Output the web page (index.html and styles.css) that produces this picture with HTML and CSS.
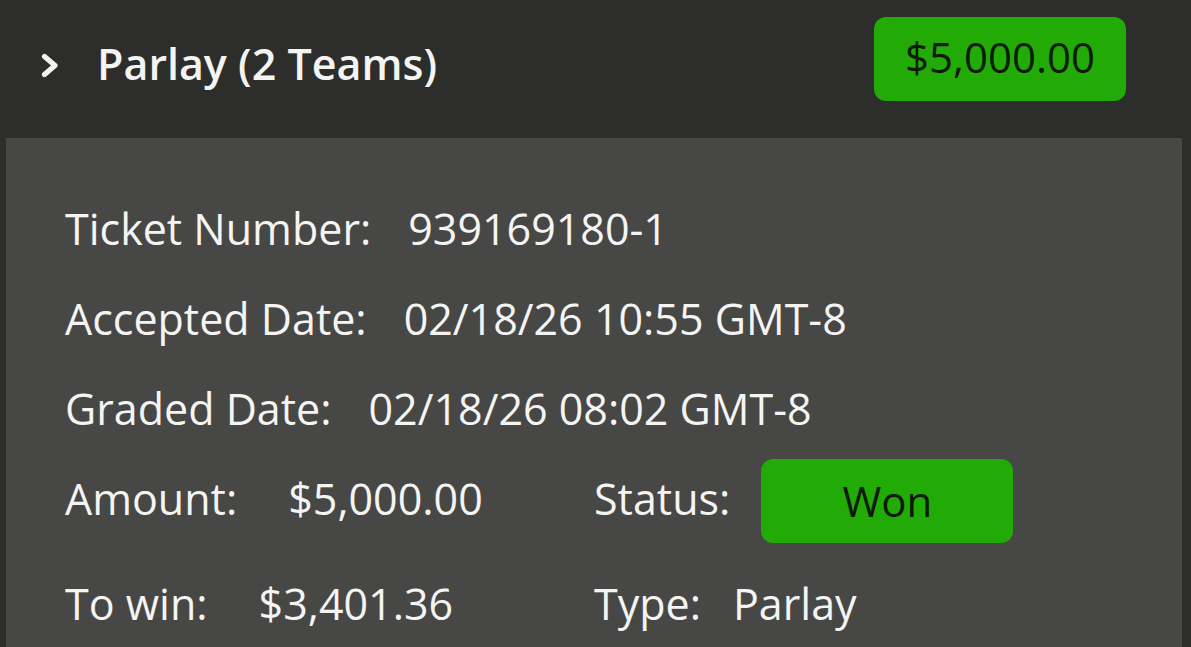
FILE: index.html
```html
<!DOCTYPE html>
<html lang="en">
<head>
<meta charset="utf-8">
<title>Parlay (2 Teams)</title>
<link rel="stylesheet" href="styles.css">
</head>
<body>
<div class="ticket">
  <header class="ticket-head">
    <svg class="chevron" width="18" height="25" viewBox="0 0 18 25" aria-hidden="true">
      <polyline points="3.5,3.5 14,12.5 3.5,21.5" fill="none" stroke="#f4f4f2" stroke-width="5.2" stroke-linecap="round" stroke-linejoin="round"/>
    </svg>
    <h1 class="ticket-title">Parlay (2 Teams)</h1>
    <div class="badge badge-head">$5,000.00</div>
  </header>
  <section class="ticket-body">
    <div class="row">
      <span class="label">Ticket Number:</span><span class="value gap-a">939169180-1</span>
    </div>
    <div class="row">
      <span class="label">Accepted Date:</span><span class="value gap-a">02/18/26 10:55 GMT-8</span>
    </div>
    <div class="row">
      <span class="label">Graded Date:</span><span class="value gap-a">02/18/26 08:02 GMT-8</span>
    </div>
    <div class="row row-split">
      <div class="field"><span class="label">Amount:</span><span class="value gap-b">$5,000.00</span></div>
      <div class="field"><span class="label">Status:</span><div class="badge badge-status">Won</div></div>
    </div>
    <div class="row row-split row-last">
      <div class="field"><span class="label">To win:</span><span class="value gap-b">$3,401.36</span></div>
      <div class="field"><span class="label">Type:</span><span class="value gap-c">Parlay</span></div>
    </div>
  </section>
</div>
</body>
</html>
```

FILE: styles.css
```css
* {
  box-sizing: border-box;
}

html, body {
  margin: 0;
  padding: 0;
  background: #2d2d2b;
  font-family: "Open Sans", "Noto Sans", "Liberation Sans", sans-serif;
  color: #f4f4f2;
}

.ticket {
  width: 1191px;
}

.ticket-head {
  display: flex;
  align-items: flex-start;
  height: 138px;
  padding: 17px 65px 0 41px;
}

.chevron {
  display: block;
  flex: none;
  margin-top: 36px;
}

.ticket-title {
  margin: 17px 0 0 38px;
  font-size: 43px;
  line-height: 60px;
  font-weight: 600;
  color: #f4f4f2;
  letter-spacing: 0;
}

.badge {
  display: flex;
  align-items: center;
  justify-content: center;
  width: 252px;
  height: 84px;
  border-radius: 12px;
  background: #22ab06;
  color: #0c1a06;
  font-size: 42px;
  line-height: 60px;
}

.badge-head {
  margin-left: auto;
  padding-bottom: 5px;
}

.ticket-body {
  margin: 0 9px 0 6px;
  min-height: 560px;
  background: #474746;
  padding: 61px 59px 40px;
  display: flex;
  flex-direction: column;
  gap: 30px;
}

.row {
  display: flex;
  align-items: center;
  height: 60px;
  font-size: 43px;
  line-height: 60px;
}

.row-split {
  display: grid;
  grid-template-columns: 529px 1fr;
}

.row-last {
  margin-top: 15px;
}

.field {
  display: flex;
  align-items: center;
  height: 60px;
}

.label {
  white-space: nowrap;
}

.value {
  white-space: nowrap;
}

.gap-a {
  margin-left: 37px;
}

.gap-b {
  margin-left: 51px;
}

.gap-c {
  margin-left: 32px;
}

.badge-status {
  margin: -10px 0 -14px 31px;
  flex: none;
}
```
